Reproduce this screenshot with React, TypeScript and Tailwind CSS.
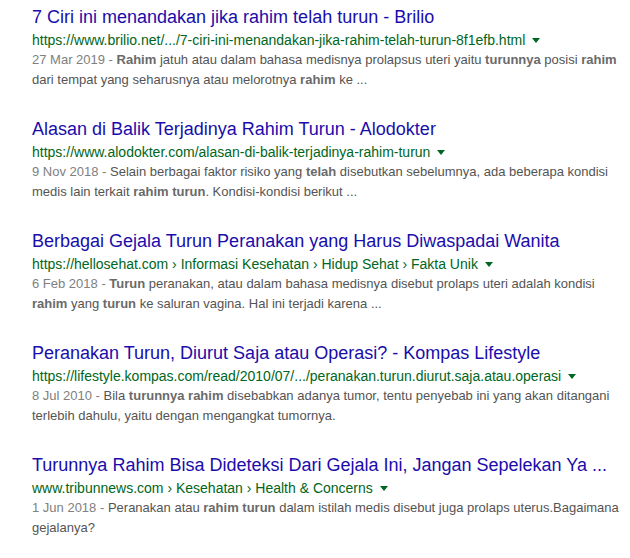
import React from "react";

type Part = string | { b: string };

type Result = {
  title: string;
  url: string[];
  date: string;
  snippet: Part[];
};

const results: Result[] = [
  {
    title: "7 Ciri ini menandakan jika rahim telah turun - Brilio",
    url: ["https://www.brilio.net/.../7-ciri-ini-menandakan-jika-rahim-telah-turun-8f1efb.html"],
    date: "27 Mar 2019",
    snippet: [
      { b: "Rahim" },
      " jatuh atau dalam bahasa medisnya prolapsus uteri yaitu ",
      { b: "turunnya" },
      " posisi ",
      { b: "rahim" },
      " dari tempat yang seharusnya atau melorotnya ",
      { b: "rahim" },
      " ke ...",
    ],
  },
  {
    title: "Alasan di Balik Terjadinya Rahim Turun - Alodokter",
    url: ["https://www.alodokter.com/alasan-di-balik-terjadinya-rahim-turun"],
    date: "9 Nov 2018",
    snippet: [
      "Selain berbagai faktor risiko yang ",
      { b: "telah" },
      " disebutkan sebelumnya, ada beberapa kondisi medis lain terkait ",
      { b: "rahim turun" },
      ". Kondisi-kondisi berikut ...",
    ],
  },
  {
    title: "Berbagai Gejala Turun Peranakan yang Harus Diwaspadai Wanita",
    url: ["https://hellosehat.com", "Informasi Kesehatan", "Hidup Sehat", "Fakta Unik"],
    date: "6 Feb 2018",
    snippet: [
      { b: "Turun" },
      " peranakan, atau dalam bahasa medisnya disebut prolaps uteri adalah kondisi ",
      { b: "rahim" },
      " yang ",
      { b: "turun" },
      " ke saluran vagina. Hal ini terjadi karena ...",
    ],
  },
  {
    title: "Peranakan Turun, Diurut Saja atau Operasi? - Kompas Lifestyle",
    url: ["https://lifestyle.kompas.com/read/2010/07/.../peranakan.turun.diurut.saja.atau.operasi"],
    date: "8 Jul 2010",
    snippet: [
      "Bila ",
      { b: "turunnya rahim" },
      " disebabkan adanya tumor, tentu penyebab ini yang akan ditangani terlebih dahulu, yaitu dengan mengangkat tumornya.",
    ],
  },
  {
    title: "Turunnya Rahim Bisa Dideteksi Dari Gejala Ini, Jangan Sepelekan Ya ...",
    url: ["www.tribunnews.com", "Kesehatan", "Health & Concerns"],
    date: "1 Jun 2018",
    snippet: [
      "Peranakan atau ",
      { b: "rahim turun" },
      " dalam istilah medis disebut juga prolaps uterus.Bagaimana gejalanya?",
    ],
  },
];

function SearchResult({ result }: { result: Result }) {
  return (
    <div className="mb-[27px]">
      <h3 className="text-[18px] leading-[24px] font-normal text-[#1a0dab] whitespace-nowrap">
        {result.title}
      </h3>
      <div className="mt-[3px] flex items-center text-[14px] leading-[16px] text-[#006621] whitespace-nowrap">
        <cite className="not-italic">{result.url.join(" › ")}</cite>
        <span className="ml-[7px] mt-[1px] inline-block h-0 w-0 border-x-[4px] border-t-[5px] border-x-transparent border-t-[#006621]" />
      </div>
      <p className="mt-[2px] text-[13px] leading-[20px] text-[#545454] w-[594px]">
        <span className="text-[#808080]">{result.date} - </span>
        {result.snippet.map((part, i) =>
          typeof part === "string" ? (
            <React.Fragment key={i}>{part}</React.Fragment>
          ) : (
            <b key={i} className="font-bold text-[#6a6a6a]">
              {part.b}
            </b>
          )
        )}
      </p>
    </div>
  );
}

export default function App() {
  return (
    <div className="min-h-screen bg-white pl-[32px] pt-[5px] font-['Liberation_Sans',Arial,sans-serif]">
      {results.map((r, i) => (
        <SearchResult key={i} result={r} />
      ))}
    </div>
  );
}
